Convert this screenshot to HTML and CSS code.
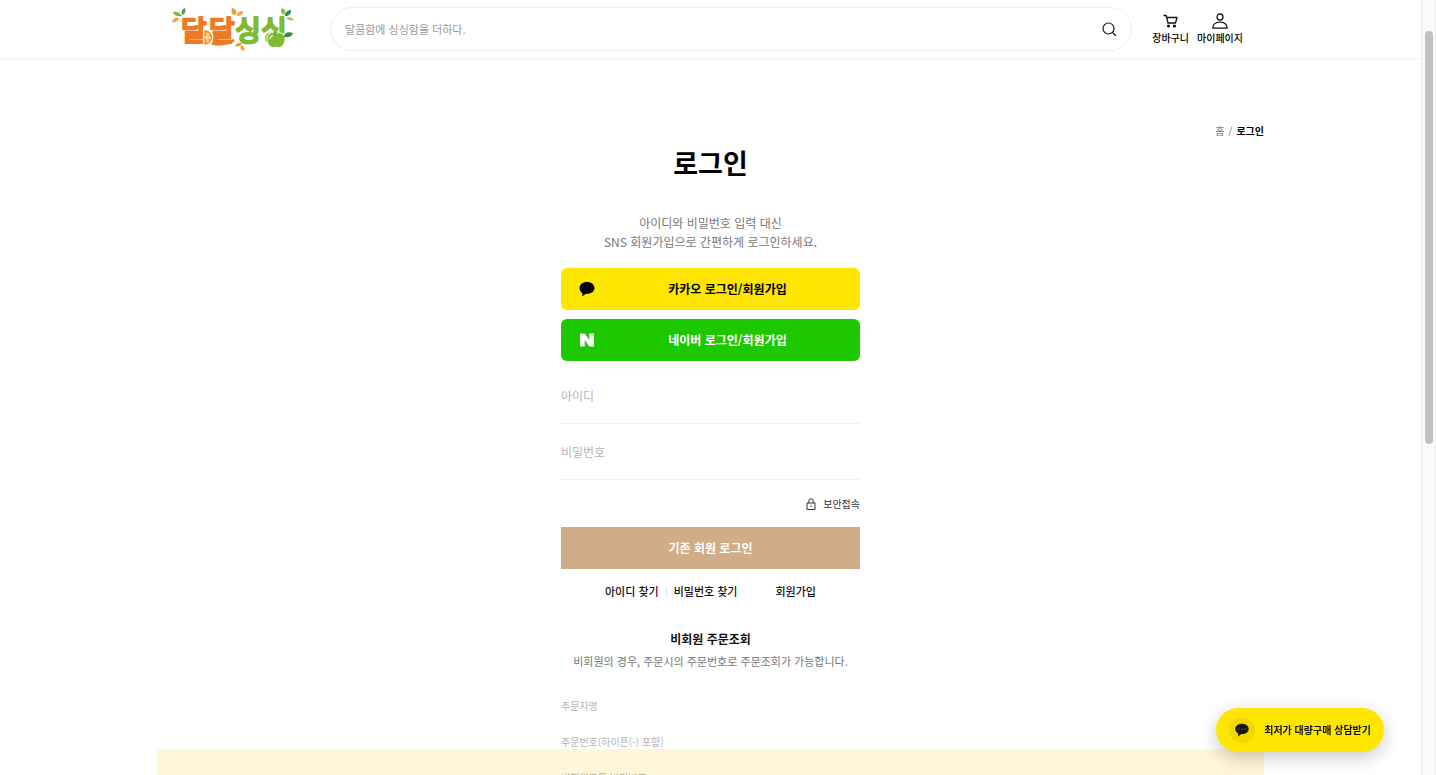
FILE: index.html
```html
<!DOCTYPE html>
<html lang="ko">
<head>
<meta charset="utf-8">
<meta name="viewport" content="width=device-width, initial-scale=1">
<title>로그인 - 달달싱싱</title>
<link rel="stylesheet" href="styles.css">
</head>
<body>
<div class="app">
  <div class="page">
    <header class="header">
      <div class="container header-inner">
        <a class="logo" href="#">
          <svg width="150" height="58" viewBox="157 0 150 58" role="img" aria-label="달달싱싱">
            <g class="logo-text" font-size="28">
              <text class="logo-orange" x="181" y="41">달</text>
              <text class="logo-orange" x="209" y="41">달</text>
              <text class="logo-green" x="235" y="41">싱</text>
              <text class="logo-green" x="261" y="41">싱</text>
            </g>
            <path d="M213 43.500c7 1 14 1 20-3" fill="none" stroke="#ee7a26" stroke-width="3" stroke-linecap="round"/>
            <g>
              <path d="M205 31a6.500 6.500 0 0 1 0 13z" fill="#fbb65c" stroke="#fff" stroke-width="3.500"/>
              <path d="M205 31a6.500 6.500 0 0 1 0 13z" fill="#fbb65c" stroke="#f18a25" stroke-width="1.300"/>
              <path d="M205.500 37.500h5M205.500 37.500l3-4M205.500 37.500l3 4" stroke="#fff" stroke-width=".8"/>
            </g>
            <path d="M276 34c-3-3-9-1-9 5 0 6 4 10 9 8 5 2 9-2 9-8 0-6-6-8-9-5z" fill="#7dbb30" stroke="#fff" stroke-width="1"/>
            <path d="M276 35.500c0-2-1-3-2-4" fill="none" stroke="#518b2d" stroke-width="1.500"/>
            <path d="M270 39c0-2 1-3 2.500-3" fill="none" stroke="#e3f2b9" stroke-width="1.500" stroke-linecap="round"/>
            <path d="M284 37c0-4 4-6 9-4-1 4-5 5-9 4z" fill="#3f8a43"/>
            <path d="M182 16c-2-4-6-5-9-4 1 4 5 5 9 4z" fill="#78b843"/>
            <path d="M182 15c-1-3 0-6 3-7 1 4 0 6-3 7z" fill="#569b45"/>
            <path d="M179 18c-4-1-6 1-7 4 4 1 6-1 7-4z" fill="#f5a13a"/>
            <path d="M236 15c-5 0-5-3-4-7 4 1 5 3 4 7z" fill="#f39a35"/>
            <path d="M237 16c0-4 2-5 6-5 0 4-2 5-6 5z" fill="#f5a947"/>
            <path d="M242 43c-4-1-6 1-7 3 3 1 6 0 7-3z" fill="#f39a35"/>
            <path d="M241 45c3 1 4 3 3 6-4-1-4-3-3-6z" fill="#f5a13a"/>
            <path d="M285 15c-4-1-5-4-3-7 3 1 4 3 3 7z" fill="#8bc34a"/>
            <path d="M285 16c0-4 3-6 6-6 0 4-2 6-6 6z" fill="#2f8a4b"/>
            <path d="M286 18c3-2 6-1 8 2-4 1-6 0-8-2z" fill="#a5cf4c"/>
          </svg>
        </a>
        <form class="search" role="search">
          <input class="search-input" type="search" aria-label="상품 검색" placeholder="달콤함에 싱싱함을 더하다.">
          <button class="search-button" type="button" aria-label="검색">
            <svg width="16" height="16" viewBox="0 0 16 16" fill="none" stroke="#1a1a1a" stroke-width="1.200" stroke-linecap="round"><circle cx="7.500" cy="7.500" r="5.500"/><path d="M11.500 11.500l3 3"/></svg>
          </button>
        </form>
        <nav class="user-menu" aria-label="사용자 메뉴">
          <a href="#">
            <svg width="16" height="16" viewBox="0 0 16 16" fill="none" stroke="#111" stroke-width="1.300" stroke-linejoin="round" stroke-linecap="round"><path d="M1 2.500h2.200L5 10h7.500L14 4.500H4"/><circle cx="5.500" cy="13" r=".9" fill="#111"/><circle cx="11.500" cy="13" r=".9" fill="#111"/></svg>
            <span>장바구니</span>
          </a>
          <a href="#">
            <svg width="16" height="16" viewBox="0 0 16 16" fill="none" stroke="#111" stroke-width="1.300" stroke-linejoin="round"><circle cx="8" cy="4" r="3"/><path d="M.8 15.200c0-4 2.800-6 7.200-6s7.200 2 7.200 6z"/></svg>
            <span>마이페이지</span>
          </a>
        </nav>
      </div>
    </header>

    <main class="container main">
      <nav class="breadcrumb" aria-label="현재 위치"><a href="#">홈</a><span>/</span><strong>로그인</strong></nav>
      <div class="login">
        <h1 class="title">로그인</h1>
        <p class="intro">아이디와 비밀번호 입력 대신<br>SNS 회원가입으로 간편하게 로그인하세요.</p>
        <div class="social">
          <button class="social-button kakao" type="button">
            <svg width="16" height="16" viewBox="0 0 16 16"><path d="M8 1C3.600 1 .5 3.600.5 7c0 2.300 1.200 4.100 3 5.200L3 15.400l4-2.600h1c4.400 0 7.500-2.400 7.500-5.800S12.400 1 8 1z" fill="#000"/></svg>
            <span>카카오 로그인/회원가입</span>
          </button>
          <button class="social-button naver" type="button">
            <svg width="16" height="16" viewBox="0 0 16 16"><path d="M1 1.500h4.700l4.600 6.500V1.500H15v13h-4.700L5.700 8v6.500H1z" fill="#fff"/></svg>
            <span>네이버 로그인/회원가입</span>
          </button>
        </div>
        <form class="login-form">
          <input class="field" type="text" aria-label="아이디" placeholder="아이디">
          <input class="field" type="password" aria-label="비밀번호" placeholder="비밀번호">
          <p class="secure">
            <svg width="10" height="12" viewBox="0 0 10 12" fill="none" stroke="#333" stroke-width="1"><path d="M1 5h8v6.500H1zM2.800 5V3a2.200 2.200 0 0 1 4.400 0v2"/><path d="M5 7.500v1.500"/></svg>
            <span>보안접속</span>
          </p>
          <button class="submit" type="button">기존 회원 로그인</button>
        </form>
        <nav class="links" aria-label="회원 메뉴">
          <a class="find-id" href="#">아이디 찾기</a>
          <a class="find-password" href="#">비밀번호 찾기</a>
          <a class="join" href="#">회원가입</a>
        </nav>
        <section class="guest">
          <h2>비회원 주문조회</h2>
          <p>비회원의 경우, 주문시의 주문번호로 주문조회가 가능합니다.</p>
          <form>
            <input class="guest-field" type="text" aria-label="주문자명" placeholder="주문자명">
            <input class="guest-field" type="text" aria-label="주문번호" placeholder="주문번호(하이픈(-) 포함)">
            <input class="guest-field" type="password" aria-label="비회원주문 비밀번호" placeholder="비회원주문 비밀번호">
          </form>
        </section>
      </div>
    </main>
    <div class="notice-layer"><div class="container notice"></div></div>
    <button class="chat" type="button">
      <span class="chat-icon">
        <svg width="14" height="14" viewBox="0 0 14 14"><path d="M7 .8C3.200.8.300 3 .300 6c0 2 1.200 3.600 3 4.500l-.4 3 3.600-2.400H7c3.800 0 6.700-2.100 6.700-5.100S10.800.8 7 .8z" fill="#1b1811"/><circle cx="4" cy="6" r=".6" fill="#a89a10"/><circle cx="7" cy="6" r=".6" fill="#a89a10"/><circle cx="10" cy="6" r=".6" fill="#a89a10"/></svg>
      </span>
      <span>최저가 대량구매 상담받기</span>
    </button>
  </div>
  <div class="scrollbar" aria-hidden="true"><div class="scrollbar-thumb"></div></div>
</div>
</body>
</html>
```

FILE: styles.css
```css
* { box-sizing: border-box; }
body {
  margin: 0;
  background: #fff;
  color: #111;
  font-family: "Noto Sans CJK KR", sans-serif;
  font-size: 12px;
  line-height: 18px;
}
h1, h2, p { margin: 0; }
a { color: inherit; text-decoration: none; }
button, input { font: inherit; color: inherit; border: 0; padding: 0; border-radius: 0; outline: 0; }
button { cursor: pointer; }
svg { display: block; flex: none; }

.app { display: flex; height: 100vh; }
.page { flex: 1; min-width: 0; overflow: hidden; }
.container { width: 100%; max-width: 1107px; margin: 0 auto; }

.header { border-bottom: 1px solid #f4f4f4; box-shadow: 0 1px 1px #fafafa; }
.header-inner { display: flex; align-items: center; padding-right: 21px; }
.logo { margin-right: 23px; }
.logo-text { font-family: "Noto Sans CJK KR", sans-serif; font-weight: 500; stroke-width: 2; stroke-linejoin: round; }
.logo-orange { fill: #ee7a26; stroke: #ee7a26; }
.logo-green { fill: #7dbb30; stroke: #7dbb30; }
.search {
  flex: 1;
  display: flex;
  align-items: center;
  height: 44px;
  padding: 0 14px;
  border: 1px solid #ededed;
  border-radius: 22px;
}
.search-input { flex: 1; min-width: 0; background: none; font-size: 11px; }
.search-input::placeholder { color: #999; opacity: 1; }
.search-button { background: none; }
.user-menu { display: flex; gap: 8px; margin-left: 20px; font-size: 10px; line-height: 16px; font-weight: 500; color: #000; }
.user-menu a { display: flex; flex-direction: column; align-items: center; gap: 1px; }

.main { padding-top: 63px; }
.breadcrumb { display: flex; justify-content: flex-end; gap: 4px; font-size: 10px; color: #777; }
.breadcrumb strong { color: #000; }

.login { width: 299px; margin: 0 auto; text-align: center; }
.title { margin-top: 3px; font-size: 27px; line-height: 40px; font-weight: 700; color: #000; }
.intro { margin-top: 30px; line-height: 19px; color: #777; }
.social { display: grid; gap: 9px; margin-top: 17px; }
.social-button {
  display: flex;
  align-items: center;
  width: 100%;
  height: 42px;
  padding-left: 18px;
  border-radius: 6px;
  font-weight: 700;
}
.social-button span { flex: 1; }
.kakao { background: #ffe600; color: #000; }
.naver { background: #1ec800; color: #fff; }

.login-form { margin-top: 7px; }
.field {
  display: block;
  width: 100%;
  height: 56px;
  border-bottom: 1px solid #f0f0f0;
  background: none;
}
.field::placeholder, .guest-field::placeholder { color: #b5b5b5; opacity: 1; }
.secure { display: flex; justify-content: flex-end; align-items: center; gap: 7px; margin: 15px 0 14px; font-size: 10px; color: #333; }
.submit { width: 100%; height: 42px; background: #d0ac88; color: #fff; font-weight: 700; }

.links { display: flex; justify-content: center; align-items: center; margin-top: 13px; font-size: 11px; font-weight: 500; }
.find-password { display: flex; align-items: center; margin-right: 38px; }
.find-password::before { content: ""; width: 1px; height: 7px; margin: 0 7px; background: #ddd; }

.guest { margin-top: 30px; }
.guest h2 { font-size: 12px; font-weight: 700; }
.guest p { margin: 4px -20px 0; font-size: 11px; color: #777; }
.guest form { margin-top: 17px; }
.guest-field { display: block; width: 100%; height: 36px; background: none; font-size: 10px; }

.notice-layer { position: fixed; left: 0; right: 15px; bottom: 0; pointer-events: none; mix-blend-mode: multiply; }
.notice { height: 26px; background: #fff5d8; }

.chat {
  position: fixed;
  right: 52px;
  bottom: 23px;
  display: flex;
  align-items: center;
  gap: 9px;
  height: 44px;
  padding: 0 13px;
  border-radius: 22px;
  background: #ffe600;
  box-shadow: 0 5px 18px rgba(0, 0, 0, .22);
  color: #111;
  font-size: 10px;
  font-weight: 700;
}
.chat-icon { display: grid; place-items: center; width: 26px; height: 26px; border-radius: 50%; background: #f1d800; }

.scrollbar { flex: none; width: 15px; padding: 31px 2px 0 3px; border-left: 1px solid #e8e8e8; border-right: 1px solid #eee; background: #fafafa; }
.scrollbar-thumb { width: 8px; height: 55.5%; border-radius: 4px; background: #c1c1c1; }
```
